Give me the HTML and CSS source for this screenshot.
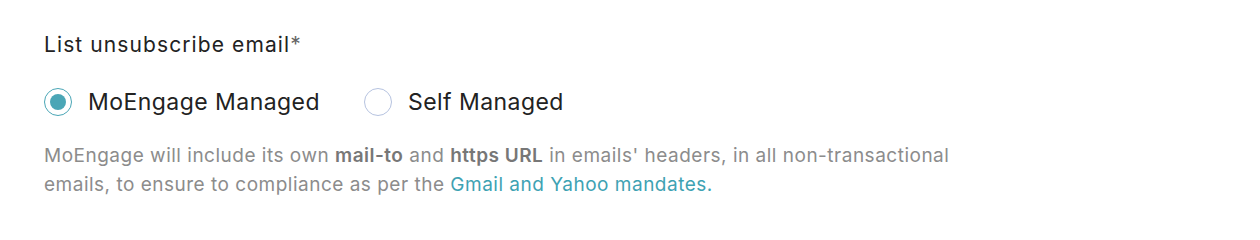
FILE: index.html
```html
<!DOCTYPE html>
<html lang="en">
<head>
<meta charset="utf-8">
<title>List unsubscribe email</title>
<link rel="stylesheet" href="styles.css">
</head>
<body>
<div class="field">
  <div class="label">List unsubscribe email<span class="req">*</span></div>
  <div class="options">
    <label class="option">
      <span class="radio checked"><span class="dot"></span></span>
      <span class="option-text">MoEngage Managed</span>
    </label>
    <label class="option">
      <span class="radio"></span>
      <span class="option-text">Self Managed</span>
    </label>
  </div>
  <p class="help">MoEngage will include its own <b>mail-to</b> and <b>https URL</b> in emails' headers, in all non-transactional emails, to ensure to compliance as per the <a href="#" class="link">Gmail and Yahoo mandates.</a></p>
</div>
</body>
</html>
```
FILE: styles.css
```css
html, body {
  margin: 0;
  padding: 0;
  background: #ffffff;
}
body {
  font-family: "Inter", "Open Sans", sans-serif;
  color: #222222;
}
.field {
  padding: 31px 0 0 44px;
}
.label {
  font-size: 21px;
  line-height: 28px;
  letter-spacing: 1.1px;
  color: #222;
}
.req {
  color: #666;
}
.options {
  display: flex;
  gap: 44px;
  margin-top: 29px;
  align-items: center;
}
.option {
  display: flex;
  align-items: center;
  gap: 16px;
}
.radio {
  box-sizing: border-box;
  width: 28px;
  height: 28px;
  border-radius: 50%;
  border: 1.5px solid #b6c3e0;
  display: flex;
  align-items: center;
  justify-content: center;
}
.radio.checked {
  border-color: #4aa6b6;
}
.dot {
  width: 16px;
  height: 16px;
  border-radius: 50%;
  background: #4aa6b6;
}
.option-text {
  font-size: 23px;
  letter-spacing: 0.45px;
  color: #222;
}
.help {
  margin: 25px 0 0;
  width: 940px;
  font-size: 19px;
  line-height: 29px;
  letter-spacing: 0.5px;
  color: #8c8c8c;
}
.help b {
  font-weight: 600;
  color: #777;
}
.link {
  color: #3ea2b3;
  text-decoration: none;
}
```
